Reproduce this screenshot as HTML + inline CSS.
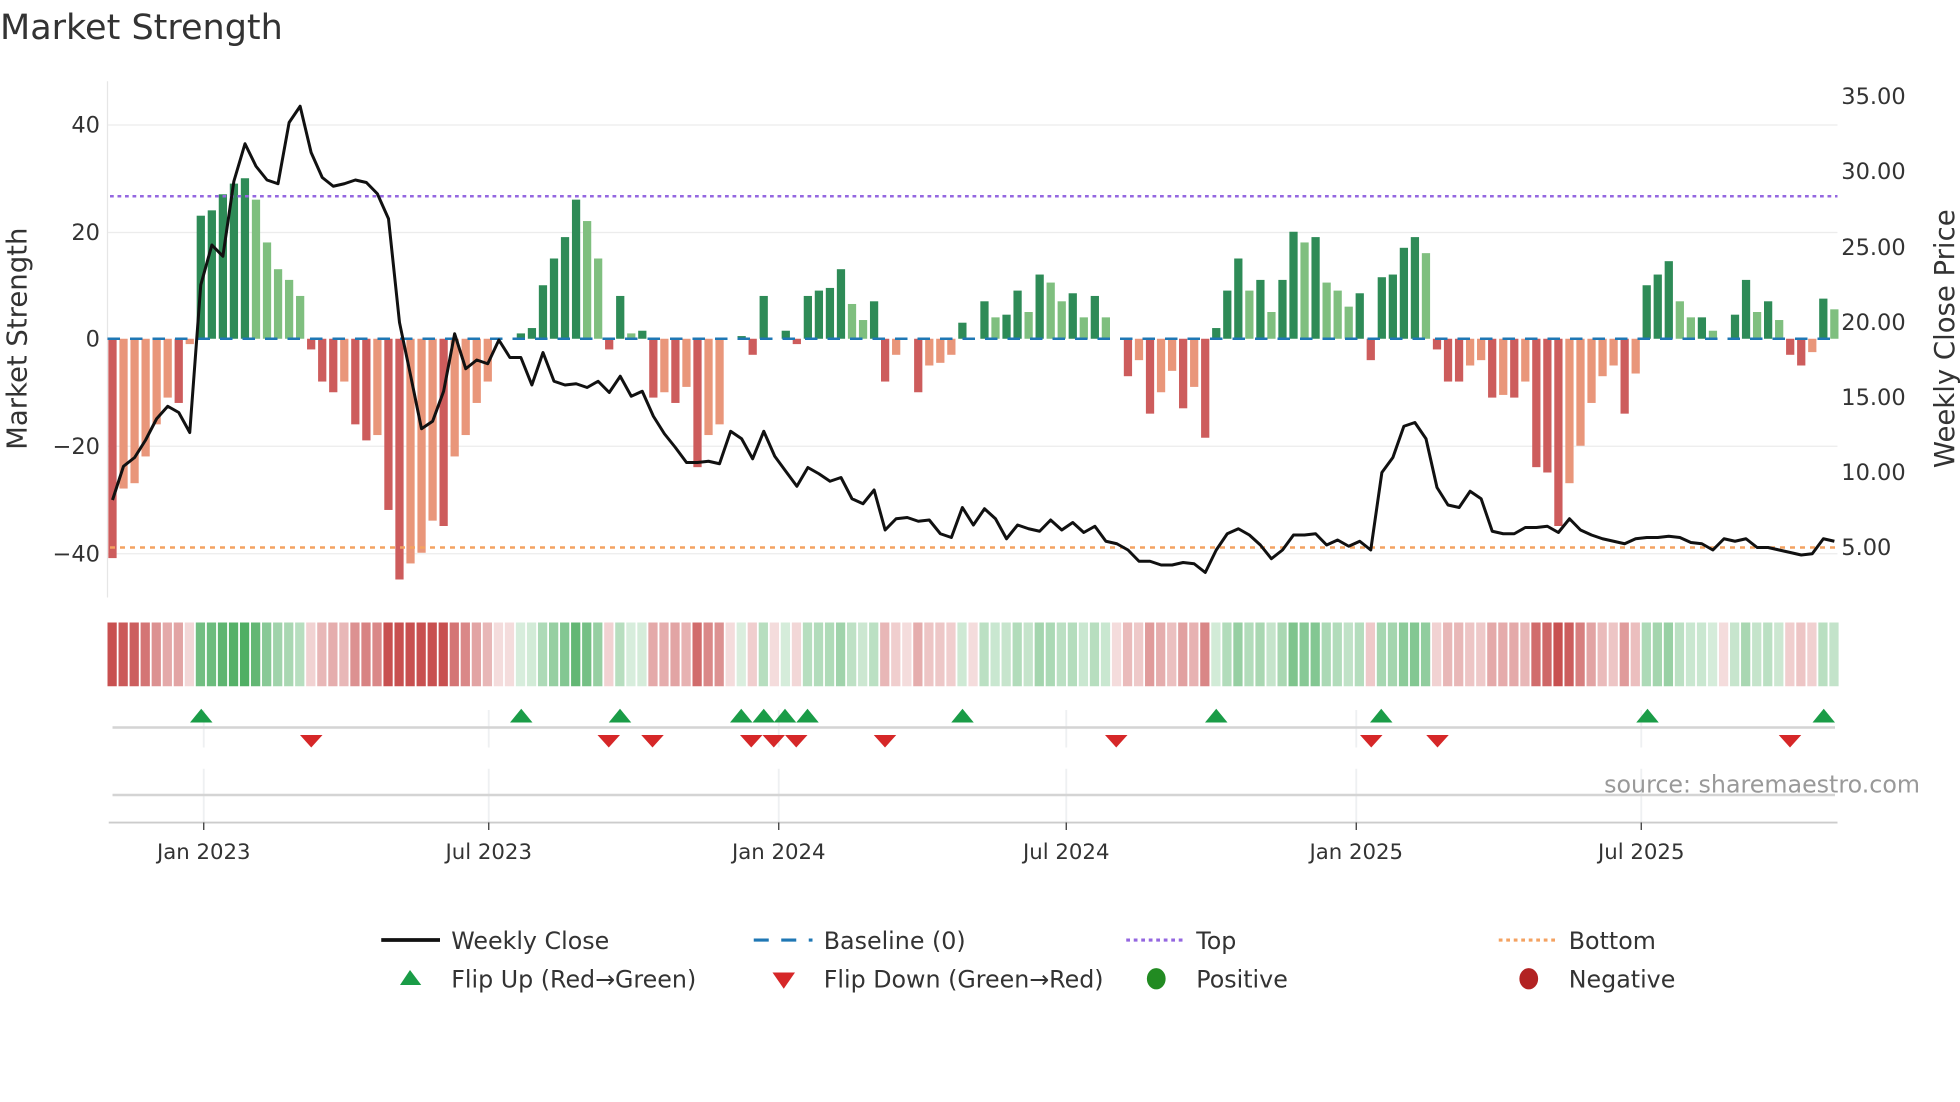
<!DOCTYPE html>
<html><head><meta charset="utf-8"><style>
html,body{margin:0;padding:0;background:#fff;width:1960px;height:1102px;overflow:hidden}
svg{display:block}
text{font-family:"DejaVu Sans","Liberation Sans",sans-serif;fill:#333}
</style></head><body>
<svg id="s" width="1960" height="1102" viewBox="0 0 1568 881.6" xmlns="http://www.w3.org/2000/svg">
<text x="0" y="31" font-size="28">Market Strength</text>
<g stroke="#ececec" stroke-width="1">
<line x1="86" y1="100" x2="1470" y2="100"/><line x1="86" y1="186" x2="1470" y2="186"/>
<line x1="86" y1="357" x2="1470" y2="357"/><line x1="86" y1="443" x2="1470" y2="443"/>
</g>
<line x1="86" y1="65" x2="86" y2="478" stroke="#e6e6e6"/>
<g id="bars"></g>
<line x1="86" y1="271" x2="1470" y2="271" stroke="#1f77b4" stroke-width="2" stroke-dasharray="10,8"/>
<line x1="88" y1="157" x2="1470" y2="157" stroke="#9467e0" stroke-width="2" stroke-dasharray="3,3"/>
<line x1="88" y1="438" x2="1470" y2="438" stroke="#f4a261" stroke-width="2" stroke-dasharray="4,4"/>
<polyline id="line" fill="none" stroke="#111" stroke-width="2.4" stroke-linejoin="round"/>
<g font-size="18" text-anchor="end">
<text x="80" y="106">40</text><text x="80" y="192">20</text><text x="80" y="277">0</text>
<text x="80" y="363">−20</text><text x="80" y="449">−40</text>
</g>
<g font-size="18">
<text x="1473" y="83">35.00</text><text x="1473" y="143">30.00</text><text x="1473" y="204">25.00</text>
<text x="1473" y="264">20.00</text><text x="1473" y="324">15.00</text><text x="1473" y="384">10.00</text>
<text x="1473" y="444">5.00</text>
</g>
<text font-size="22" transform="translate(21,271) rotate(-90)" text-anchor="middle">Market Strength</text>
<text font-size="22" transform="translate(1563,271) rotate(-90)" text-anchor="middle">Weekly Close Price</text>
<g id="strip"></g>
<g stroke="#eef0f2" stroke-width="1.5">
<line x1="163" y1="568" x2="163" y2="598"/><line x1="391" y1="568" x2="391" y2="598"/><line x1="623" y1="568" x2="623" y2="598"/><line x1="853" y1="568" x2="853" y2="598"/><line x1="1085" y1="568" x2="1085" y2="598"/><line x1="1313" y1="568" x2="1313" y2="598"/>
<line x1="163" y1="615" x2="163" y2="658"/><line x1="391" y1="615" x2="391" y2="658"/><line x1="623" y1="615" x2="623" y2="658"/><line x1="853" y1="615" x2="853" y2="658"/><line x1="1085" y1="615" x2="1085" y2="658"/><line x1="1313" y1="615" x2="1313" y2="658"/>
</g>
<line x1="90" y1="582" x2="1468" y2="582" stroke="#d4d4d4" stroke-width="2"/>
<line x1="90" y1="636" x2="1468" y2="636" stroke="#d4d4d4" stroke-width="2"/>
<line x1="87" y1="658" x2="1470" y2="658" stroke="#ccc" stroke-width="1.5"/>
<g id="marks"></g>
<text x="1536" y="634" font-size="19" text-anchor="end" style="fill:#999">source: sharemaestro.com</text>
<g stroke="#333" stroke-width="1"><line x1="163" y1="658" x2="163" y2="664"/><line x1="391" y1="658" x2="391" y2="664"/><line x1="623" y1="658" x2="623" y2="664"/><line x1="853" y1="658" x2="853" y2="664"/><line x1="1085" y1="658" x2="1085" y2="664"/><line x1="1313" y1="658" x2="1313" y2="664"/></g>
<g font-size="17" text-anchor="middle">
<text x="163" y="687">Jan 2023</text><text x="391" y="687">Jul 2023</text><text x="623" y="687">Jan 2024</text><text x="853" y="687">Jul 2024</text><text x="1085" y="687">Jan 2025</text><text x="1313" y="687">Jul 2025</text>
</g>
<g font-size="19">
<line x1="305" y1="752" x2="352" y2="752" stroke="#111" stroke-width="3"/><text x="361" y="759">Weekly Close</text>
<line x1="603" y1="752" x2="650" y2="752" stroke="#1f77b4" stroke-width="2.5" stroke-dasharray="12,10"/><text x="659" y="759">Baseline (0)</text>
<line x1="901" y1="752" x2="948" y2="752" stroke="#9467e0" stroke-width="2.5" stroke-dasharray="3,3"/><text x="957" y="759">Top</text>
<line x1="1199" y1="752" x2="1246" y2="752" stroke="#f4a261" stroke-width="2.5" stroke-dasharray="3,3"/><text x="1255" y="759">Bottom</text>
<polygon points="320,788 328,776 337,788" fill="#1a9c47"/><text x="361" y="790">Flip Up (Red→Green)</text>
<polygon points="618,778 636,778 627,791" fill="#d62728"/><text x="659" y="790">Flip Down (Green→Red)</text>
<ellipse cx="925" cy="783" rx="7.5" ry="8.5" fill="#228b22"/><text x="957" y="790">Positive</text>
<ellipse cx="1223" cy="783" rx="7.5" ry="8.5" fill="#b22222"/><text x="1255" y="790">Negative</text>
</g>
</svg>
<script>
var v=[-41,-28,-27,-22,-16,-11,-12,-1,23,24,27,29,30,26,18,13,11,8,-2,-8,-10,-8,-16,-19,-18,-32,-45,-42,-40,-34,-35,-22,-18,-12,-8,0,0,1,2,10,15,19,26,22,15,-2,8,1,1.5,-11,-10,-12,-9,-24,-18,-16,0,0.5,-3,8,0,1.5,-1,8,9,9.5,13,6.5,3.5,7,-8,-3,0,-10,-5,-4.5,-3,3,0,7,4,4.5,9,5,12,10.5,7,8.5,4,8,4,0,-7,-4,-14,-10,-6,-13,-9,-18.5,2,9,15,9,11,5,11,20,18,19,10.5,9,6,8.5,-4,11.5,12,17,19,16,-2,-8,-8,-5,-4,-11,-10.5,-11,-8,-24,-25,-35,-27,-20,-12,-7,-5,-14,-6.5,10,12,14.5,7,4,4,1.5,0,4.5,11,5,7,3.5,-3,-5,-2.5,7.5,5.5];
var S=8.83,b="",st="";
for(var i=0;i<v.length;i++){var x=90+i*S,h=v[i]*4.28,p=i?v[i-1]:0;
var dark=Math.abs(v[i])>=Math.abs(p)||(v[i]>0)!=(p>0);
var c=v[i]>=0?(dark?"#2e8b57":"#7fbf7f"):(dark?"#cd5c5c":"#e9967a");
if(v[i]!=0)b+='<rect x="'+(x-3.3)+'" y="'+(h>0?271-h:271)+'" width="6.6" height="'+Math.abs(h)+'" fill="'+c+'"/>';
var a=Math.min(1,0.2+Math.abs(v[i])/30*0.8);var sc=v[i]>0?"rgba(80,175,100,"+a+")":"rgba(200,80,80,"+a+")";
if(v[i]==0)sc="rgba(200,80,80,0.2)";
st+='<rect x="'+(x-4)+'" y="498" width="7.4" height="51" fill="'+sc+'"/>';}
document.getElementById("bars").innerHTML=b;document.getElementById("strip").innerHTML=st;
var L=[400,373,366,352,335,325,330,346,228,196,205,145,115,133,144,147,98,85,122,142,149,147,144,146,155,175,258,300,343,337,313,267,295,288,291,272,286,286,308,282,305,308,307,310,305,314,301,317,313,333,347,358,370,370,369,371,345,351,367,345,365,377,389,374,379,385,382,399,403,392,424,415,414,417,416,427,430,406,420,407,415,431,420,423,425,416,424,418,426,421,433,435,440,449,449,452,452,450,451,458,440,427,423,428,436,447,440,428,428,427,436,432,437,433,440,378,366,341,338,351,390,404,406,393,399,425,427,427,422,422,421,426,415,424,428,431,433,435,431,430,430,429,430,434,435,440,431,433,431,438,438,440,442,444,443,431,433];
document.getElementById("line").setAttribute("points",L.map(function(y,i){return (90+i*S).toFixed(1)+","+y}).join(" "));
var m="";[161,417,496,593,611,628,646,770,973,1105,1318,1459].forEach(function(x){m+='<polygon points="'+(x-9)+',578 '+x+',567 '+(x+9)+',578" fill="#1a9c47"/>'});
[249,487,522,601,619,637,708,893,1097,1150,1432].forEach(function(x){m+='<polygon points="'+(x-9)+',588 '+(x+9)+',588 '+x+',598" fill="#d62728"/>'});
document.getElementById("marks").innerHTML=m;
</script>
</body></html>
